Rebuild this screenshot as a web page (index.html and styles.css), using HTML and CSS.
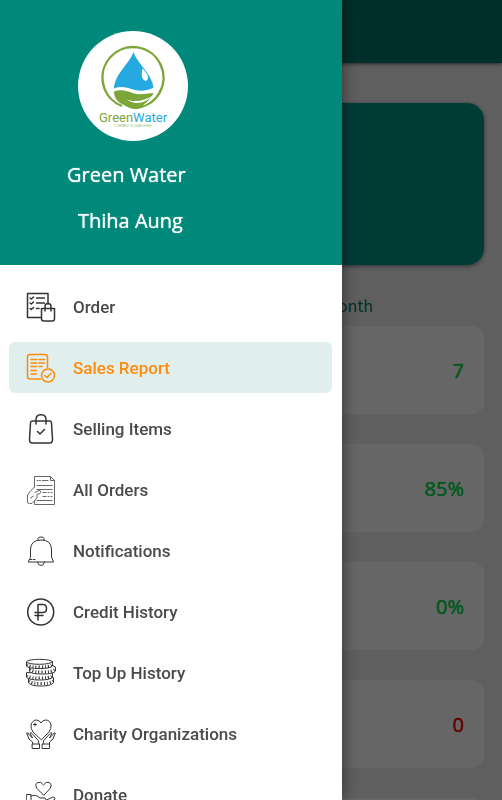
FILE: index.html
```html
<!DOCTYPE html>
<html lang="en">
<head>
<meta charset="utf-8">
<meta name="viewport" content="width=device-width, initial-scale=1">
<title>Sales Report</title>
<link rel="stylesheet" href="styles.css">
</head>
<body>
<div class="page">
  <header class="appbar"></header>
  <main class="content">
    <section class="hero"></section>
    <h2 class="period">Month</h2>
    <ul class="stats">
      <li class="stat">7</li>
      <li class="stat">85%</li>
      <li class="stat">0%</li>
      <li class="stat stat-bad">0</li>
      <li class="stat"></li>
    </ul>
  </main>
</div>
<div class="scrim"></div>
<aside class="drawer">
  <div class="profile">
    <svg class="logo" viewBox="0 0 110 110" role="img" aria-label="GreenWater">
      <circle cx="55" cy="55" r="55" fill="#fff"/>
      <path d="M44 75A30.500 30.500 0 1 1 57 77" fill="none" stroke="#7ca53a" stroke-width="2.400"/>
      <path d="M55.500 21C52 32 36.500 43 36 57.500C43 55 48 56 55 58.500C61 60.500 69 60 75.500 56.500C74 43 59 32 55.500 21Z" fill="#25a9e0"/>
      <path d="M36 60.500C44 58 49 60 56 62.500C62 64.500 70 62 75.500 62C73 68 68 72 61 77.500C56 79 50 77 46 74C40 72 36 67 36 60.500Z" fill="#7ca53a"/>
      <path d="M48 68C55 72 67 70 75 64.500C68 72 57 75 48 68Z" fill="#fff"/>
      <path d="M64.500 37C64.500 41 62.500 44 65 48C67 51 70.500 50 70 46C69.500 42 66 40 64.500 37Z" fill="#fff"/>
      <text class="logo-name" x="21" y="91" fill="#7ca53a">Green<tspan fill="#25a9e0">Water</tspan></text>
      <text class="logo-slogan" x="55" y="96" fill="#9dbb6c">COMPANY SLOGAN HERE</text>
    </svg>
    <p class="shop">Green Water</p>
    <p class="user">Thiha Aung</p>
  </div>
  <nav class="menu">
    <a class="item" href="#order">
      <svg class="icon" viewBox="0 0 30 30"><path d="M14.500 25.500H1.500V1.500H22V12M10.500 6H18.500M10.500 11H18.500M10.500 16.500H13M4 6L5.300 7L7.500 5M4 11L5.300 12L7.500 10M4 16.500L5.300 17.500L7.500 15.500"/><path d="M15.500 16.500H28.500V27Q28.500 29 26 29H18Q15.500 29 15.500 27ZM19 19V14.500Q19 11.500 22 11.500T25 14.500V19"/></svg>
      <span>Order</span></a>
    <a class="item active" href="#sales" aria-current="page">
      <svg class="icon" viewBox="0 0 30 30"><path d="M14.500 26H4Q1.500 26 1.500 23.500V4Q1.500 1.500 4 1.500H19Q21.500 1.500 21.500 4V14.500"/><path d="M5 6.500H10.500M13 6.500H18.500M5 10H10.500M13 10H18.500M5 13.500H10.500M13 13.500H16M5 17.500H10.500M5 21H10.500"/><circle cx="22" cy="22.500" r="6.500"/><path d="M19 22.500L21 24.500L25 20.500"/></svg>
      <span>Sales Report</span></a>
    <a class="item" href="#items">
      <svg class="icon" viewBox="0 0 30 30"><path d="M6 7H24Q25.300 7 25.500 9L26.500 25.500Q26.500 29 23.500 29H6.500Q3.500 29 3.500 25.500L4.500 9Q4.700 7 6 7ZM10 10V5.500Q10 .8 15 .8T20 5.500V10M11.500 17.500L14 20L18.500 15.500"/></svg>
      <span>Selling Items</span></a>
    <a class="item" href="#orders">
      <svg class="icon light" viewBox="0 0 30 30"><path d="M8.500 12V1.500H24.500L28.500 5.500V29.500H8.500V26M24.500 1.500V5.500H28.500M11 5.500H12M13.500 5.500H14.500M16.500 5.500H22M11 10.500H26M11 14.500H26M17 17.500H20M22 17.500H23M25 17.500H26M17 21.500H20M22 21.500H23M25 21.500H26M11 25.500H26"/><path d="M8.500 12L4.500 16L1.500 20V27Q1.500 28.500 3.500 28.500H6L8.500 26L11 22.500V19.500L14 18.500Q16 15.500 13 15.500L9 17.500M4.500 23L7.500 21"/></svg>
      <span>All Orders</span></a>
    <a class="item" href="#notifications">
      <svg class="icon thin" viewBox="0 0 30 30"><path d="M2.500 26H27.500L25.500 21V13Q25 4 15 4T4.500 13V21ZM12 4V2.500Q12 1 15 1T18 2.500V4M11.500 26Q12 29.500 15 29.500T18.500 26M4.500 23.500H6M7.500 23.500H9"/></svg>
      <span>Notifications</span></a>
    <a class="item" href="#credit">
      <svg class="icon" viewBox="0 0 30 30"><circle cx="14.700" cy="15" r="13"/><path d="M12 23V7.500H17Q20.500 7.500 20.500 11.500T17 15.500H9M9 18.500H17"/></svg>
      <span>Credit History</span></a>
    <a class="item" href="#topup">
      <svg class="icon coins" viewBox="0 0 30 30">
        <path d="M2.500 20V24.500Q4 28 15 28T27.500 24.500V20Z"/><path class="ridges" d="M3 23Q6 25.500 15 25.500T27 23"/>
        <path d="M.5 15V19Q2 22 13.500 22T26.500 19V15Z"/><path class="ridges" d="M1 18Q4 20 13.500 20T26 18"/>
        <path d="M3.500 9V13.500Q5 16 16.500 16T29.500 13V9Q27 7 24 7Z"/><path class="ridges" d="M4 11.500Q7 14 16.500 14T29 11.500"/>
        <path d="M.5 4V8Q2 10.500 13.500 10.500T26.500 8V4"/><path class="ridges" d="M1 7Q4 9 13.500 9T26 7"/>
        <ellipse cx="13.500" cy="3.800" rx="13" ry="2.500"/></svg>
      <span>Top Up History</span></a>
    <a class="item" href="#charity">
      <svg class="icon thin" viewBox="0 0 30 30"><path d="M15 20.500L7 13Q4.500 9.500 5 6Q6.500 1 10.500 1Q13.500 1 15 4Q16.500 1 19.500 1Q24 1 25 6Q25.500 9.500 23 13ZM9 4V7M7.500 5.500H10.500"/><path d="M6.500 25V23L3 20L.7 14Q2 13 3 15.500L6.500 19L4 14Q5 13 6.500 15L10 19Q13 21 13 25M23.500 25V23L27 20L29.300 14Q28 13 27 15.500L23.500 19L26 14Q25 13 23.500 15L20 19Q17 21 17 25M6.500 25H13.500V29.500H6.500ZM16.500 25H23.500V29.500H16.500Z"/></svg>
      <span>Charity Organizations</span></a>
    <a class="item" href="#donate">
      <svg class="icon thin" viewBox="0 0 30 30"><path d="M17.500 15L10.500 8Q8.500 4.500 11.500 2.500Q15 1 17.500 5Q20 1 23.500 2.500Q26.500 4.500 24.500 8ZM.7 14.500H5V29H.7ZM5 16Q10 14 14 18H19Q21 20 19 21.500H13M20.500 20L27 17Q29 17 29 19L19 27H5"/></svg>
      <span>Donate</span></a>
  </nav>
</aside>
</body>
</html>
```
FILE: styles.css
```css
* {
  box-sizing: border-box;
}

body {
  margin: 0;
  height: 100vh;
  overflow: hidden;
  background: #eee;
  font-family: "Open Sans", sans-serif;
}

.page {
  height: 100%;
  overflow: hidden;
}

.appbar {
  height: 63px;
  background: #00756a;
  box-shadow: 0 1px 4px rgba(0, 0, 0, 0.6);
}

.content {
  padding: 40px 18px 0;
}

.hero {
  height: 162px;
  border-radius: 17px;
  background: #009688;
  box-shadow: 0 1px 4px rgba(0, 0, 0, 0.5);
}

.period {
  margin: 28px 111px 9px 0;
  color: #00796b;
  font-family: "Noto Sans CJK SC", sans-serif;
  font-size: 16px;
  font-weight: 400;
  line-height: 24px;
  text-align: right;
}

.stats {
  display: grid;
  gap: 30px;
  margin: 0;
  padding: 0;
  list-style: none;
}

.stat {
  display: flex;
  align-items: center;
  justify-content: flex-end;
  height: 88px;
  padding: 0 20px;
  border-radius: 12px;
  background: #fff;
  color: #00dc46;
  font-size: 20px;
  text-shadow: 0 0 1px currentColor;
}

.stat-bad {
  color: #f00;
}

.scrim {
  position: fixed;
  inset: 0;
  background: rgba(0, 0, 0, 0.6);
}

.drawer {
  position: fixed;
  top: 0;
  bottom: 0;
  left: 0;
  width: calc(100% - 160px);
  overflow: hidden;
  background: #fff;
  box-shadow: 0 0 16px rgba(0, 0, 0, 0.5);
}

.profile {
  height: 265px;
  padding: 31px 0 0 67px;
  background: #00897b;
  color: #fff;
  font-size: 20px;
  line-height: 28px;
  text-shadow: 0 0 1px currentColor;
}

.profile p {
  margin: 0 0 18px;
}

.logo {
  display: block;
  width: 110px;
  height: 110px;
  margin: 0 0 20px 11px;
  text-shadow: none;
}

.logo-name {
  font-family: Roboto, sans-serif;
  font-size: 13px;
}

.logo-slogan {
  font-family: "Liberation Sans", sans-serif;
  font-size: 3px;
  text-anchor: middle;
}

.profile .user {
  margin-left: 11px;
}

.menu {
  display: grid;
  gap: 10px;
  padding: 16px 10px 0 9px;
}

.item {
  display: flex;
  align-items: center;
  gap: 17px;
  height: 51px;
  padding: 0 17px;
  border-radius: 6px;
  color: #4a4a4a;
  font-family: Roboto, sans-serif;
  font-size: 17px;
  font-weight: 500;
  text-decoration: none;
}

.active {
  background: #e0eeed;
  color: #ff8c0a;
}

.icon {
  flex: none;
  width: 30px;
  height: 30px;
  fill: none;
  stroke: #333;
  stroke-width: 1.5;
  stroke-linecap: round;
  stroke-linejoin: round;
}

.active .icon {
  stroke: #ff8c0a;
}

.icon.thin {
  stroke-width: 1;
}

.icon.light {
  stroke: #666;
  stroke-width: 1;
}

.icon.coins {
  fill: #fff;
  stroke-width: 1;
}

.coins .ridges {
  fill: none;
  stroke-width: 3;
  stroke-linecap: butt;
  stroke-dasharray: 1 2;
}
```
